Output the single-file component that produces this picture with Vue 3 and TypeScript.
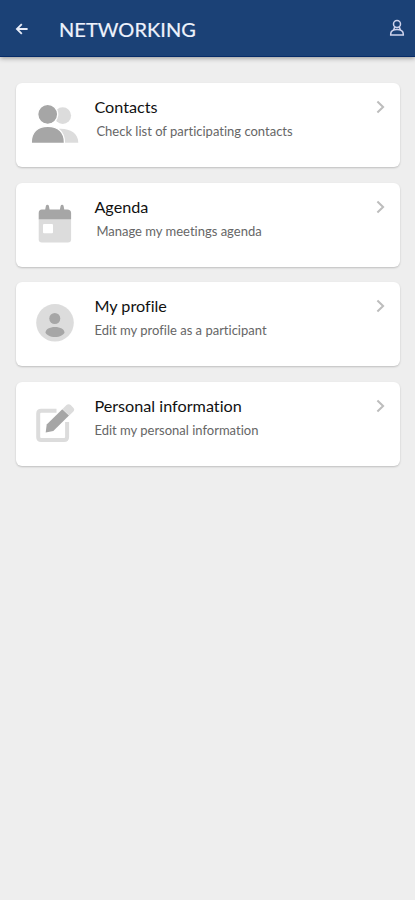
<script setup lang="ts">
type IconName = 'contacts' | 'agenda' | 'profile' | 'edit'

interface MenuEntry {
  icon: IconName
  title: string
  text: string
}

const entries: MenuEntry[] = [
  { icon: 'contacts', title: 'Contacts', text: 'Check list of participating contacts' },
  { icon: 'agenda', title: 'Agenda', text: 'Manage my meetings agenda' },
  { icon: 'profile', title: 'My profile', text: 'Edit my profile as a participant' },
  { icon: 'edit', title: 'Personal information', text: 'Edit my personal information' },
]
</script>

<template>
  <div class="screen">
    <header class="bar">
      <svg class="back" viewBox="0 0 14 14" aria-hidden="true">
        <path d="M12.6 7H2M6.8 2.1 1.9 7l4.9 4.9" />
      </svg>
      <h1 class="heading">NETWORKING</h1>
      <svg class="user" viewBox="0 0 16 18" aria-hidden="true">
        <circle cx="8" cy="5" r="3.5" />
        <path d="M1.7 15.9v-.7c0-2.9 2.5-4.8 6.3-4.8s6.3 1.9 6.3 4.8v.7Z" />
        <path d="M5.8 7.7 4.6 11M10.2 7.7l1.2 3.3" />
      </svg>
    </header>

    <main class="list">
      <article v-for="entry in entries" :key="entry.icon" class="card">
        <svg class="icon" viewBox="0 0 78 84" aria-hidden="true">
          <g v-if="entry.icon === 'contacts'">
            <circle class="light" cx="46.7" cy="32.6" r="8.4" />
            <path class="light" d="M42 46c11-1 20.3 4 20.3 13.7H42Z" />
            <circle class="dark rim" cx="31.7" cy="31.3" r="10" />
            <path class="dark rim" d="M15.3 60.3v-1c0-10 6-16 16.5-16s16.6 6 16.6 16v1Z" />
          </g>
          <g v-else-if="entry.icon === 'agenda'">
            <path class="light" d="M22.7 36h32.4v20.3q0 3.2-3.2 3.2h-26q-3.2 0-3.2-3.2Z" />
            <path class="dark" d="M25.9 26.5h3.3l.7-3.4q.3-1.3 1.5-1.3t1.5 1.3l.7 3.4h10.3l.7-3.4q.3-1.3 1.5-1.3t1.5 1.3l.7 3.4h2.8q4 0 4 3.6v6.1H22.7v-6.1q0-3.6 3.2-3.6Z" />
            <rect class="paper" x="27" y="41" width="10" height="9.3" rx="1" />
          </g>
          <g v-else-if="entry.icon === 'profile'">
            <circle class="light" cx="39" cy="40.8" r="18.8" />
            <circle class="dark" cx="38.8" cy="36.5" r="5.5" />
            <path class="dark" d="M29.6 50.3c0-3 4-5.3 9.4-5.3s9.4 2.3 9.4 5.3c0 2.5-4.7 4.8-9.4 4.8s-9.4-2.3-9.4-4.8Z" />
          </g>
          <g v-else>
            <path class="outline" d="M40.5 28.7H25.2q-3 0-3 3v23.2q0 3 3 3h22.9q3 0 3-3V40" />
            <path class="dark" d="M29.7 50.4 30.7 42.5 46.3 27.2l6.7 6.3L37.3 48.9Z" />
            <path class="light" d="m46.5 27 4-3.9c1.2-1.1 3-1.1 4.2 0l2.6 2.6c1.2 1.1 1.2 2.6.1 3.7L53.3 33.5Z" />
          </g>
        </svg>
        <div class="body">
          <h2 class="title">{{ entry.title }}</h2>
          <p :class="['text', entry.icon]">{{ entry.text }}</p>
        </div>
        <svg class="chevron" viewBox="0 0 9 14" aria-hidden="true">
          <path d="m1.4 1.5 5.7 5.5-5.7 5.5" />
        </svg>
      </article>
    </main>
  </div>
</template>

<style>
body {
  background: #eee;
}
</style>

<style scoped>
.screen {
  box-sizing: border-box;
  min-height: 900px;
  background: #eee;
  font-family: Lato, 'Liberation Sans', sans-serif;
  font-variant-ligatures: none;
}

.bar {
  box-sizing: border-box;
  display: flex;
  align-items: center;
  height: 57px;
  padding: 2px 10px 0 15px;
  background: #1b4176;
  border-bottom: 1px solid #062b68;
  box-shadow: 0 1px 5px rgba(0, 0, 0, 0.4);
}

.back {
  width: 14px;
  height: 14px;
  fill: none;
  stroke: #e9edf8;
  stroke-width: 1.8;
}

.heading {
  margin: -1px auto 0 30px;
  color: #eef2fc;
  font-size: 20px;
  font-weight: 400;
  line-height: 26px;
  letter-spacing: 0.05px;
  -webkit-text-stroke: 0.2px #eef2fc;
}

.user {
  width: 16px;
  height: 18px;
  margin-top: -2px;
  fill: none;
  stroke: #cfd3ec;
  stroke-width: 1.5;
}

.list {
  display: flex;
  flex-direction: column;
  gap: 15.4px;
  padding: 26.4px 15px 0 16px;
}

.card {
  display: flex;
  align-items: flex-start;
  height: 84px;
  border-radius: 6px;
  background: #fff;
  box-shadow: 0 1px 2px rgba(0, 0, 0, 0.2);
}

.icon {
  flex: none;
  width: 78px;
  height: 84px;
}

.dark {
  fill: #a6a6a6;
}

.light {
  fill: #dcdcdc;
}

.paper {
  fill: #fff;
}

.rim {
  stroke: #fff;
  stroke-width: 1.3;
}

.outline {
  fill: none;
  stroke: #dcdcdc;
  stroke-width: 4;
}

.body {
  flex: 1;
  padding: 14px 0 0 0.4px;
}

.title {
  margin: 0;
  color: #111;
  font-size: 16.2px;
  font-weight: 400;
  line-height: 20px;
}

.text {
  margin: 6px 0 0;
  color: #666;
  font-size: 13px;
  line-height: 16px;
  white-space: nowrap;
}

.text.contacts,
.text.agenda {
  padding-left: 2px;
}

.chevron {
  flex: none;
  width: 9px;
  height: 14px;
  margin: 17px 15px 0 0;
  fill: none;
  stroke: #bdbdbd;
  stroke-width: 2;
}
</style>
